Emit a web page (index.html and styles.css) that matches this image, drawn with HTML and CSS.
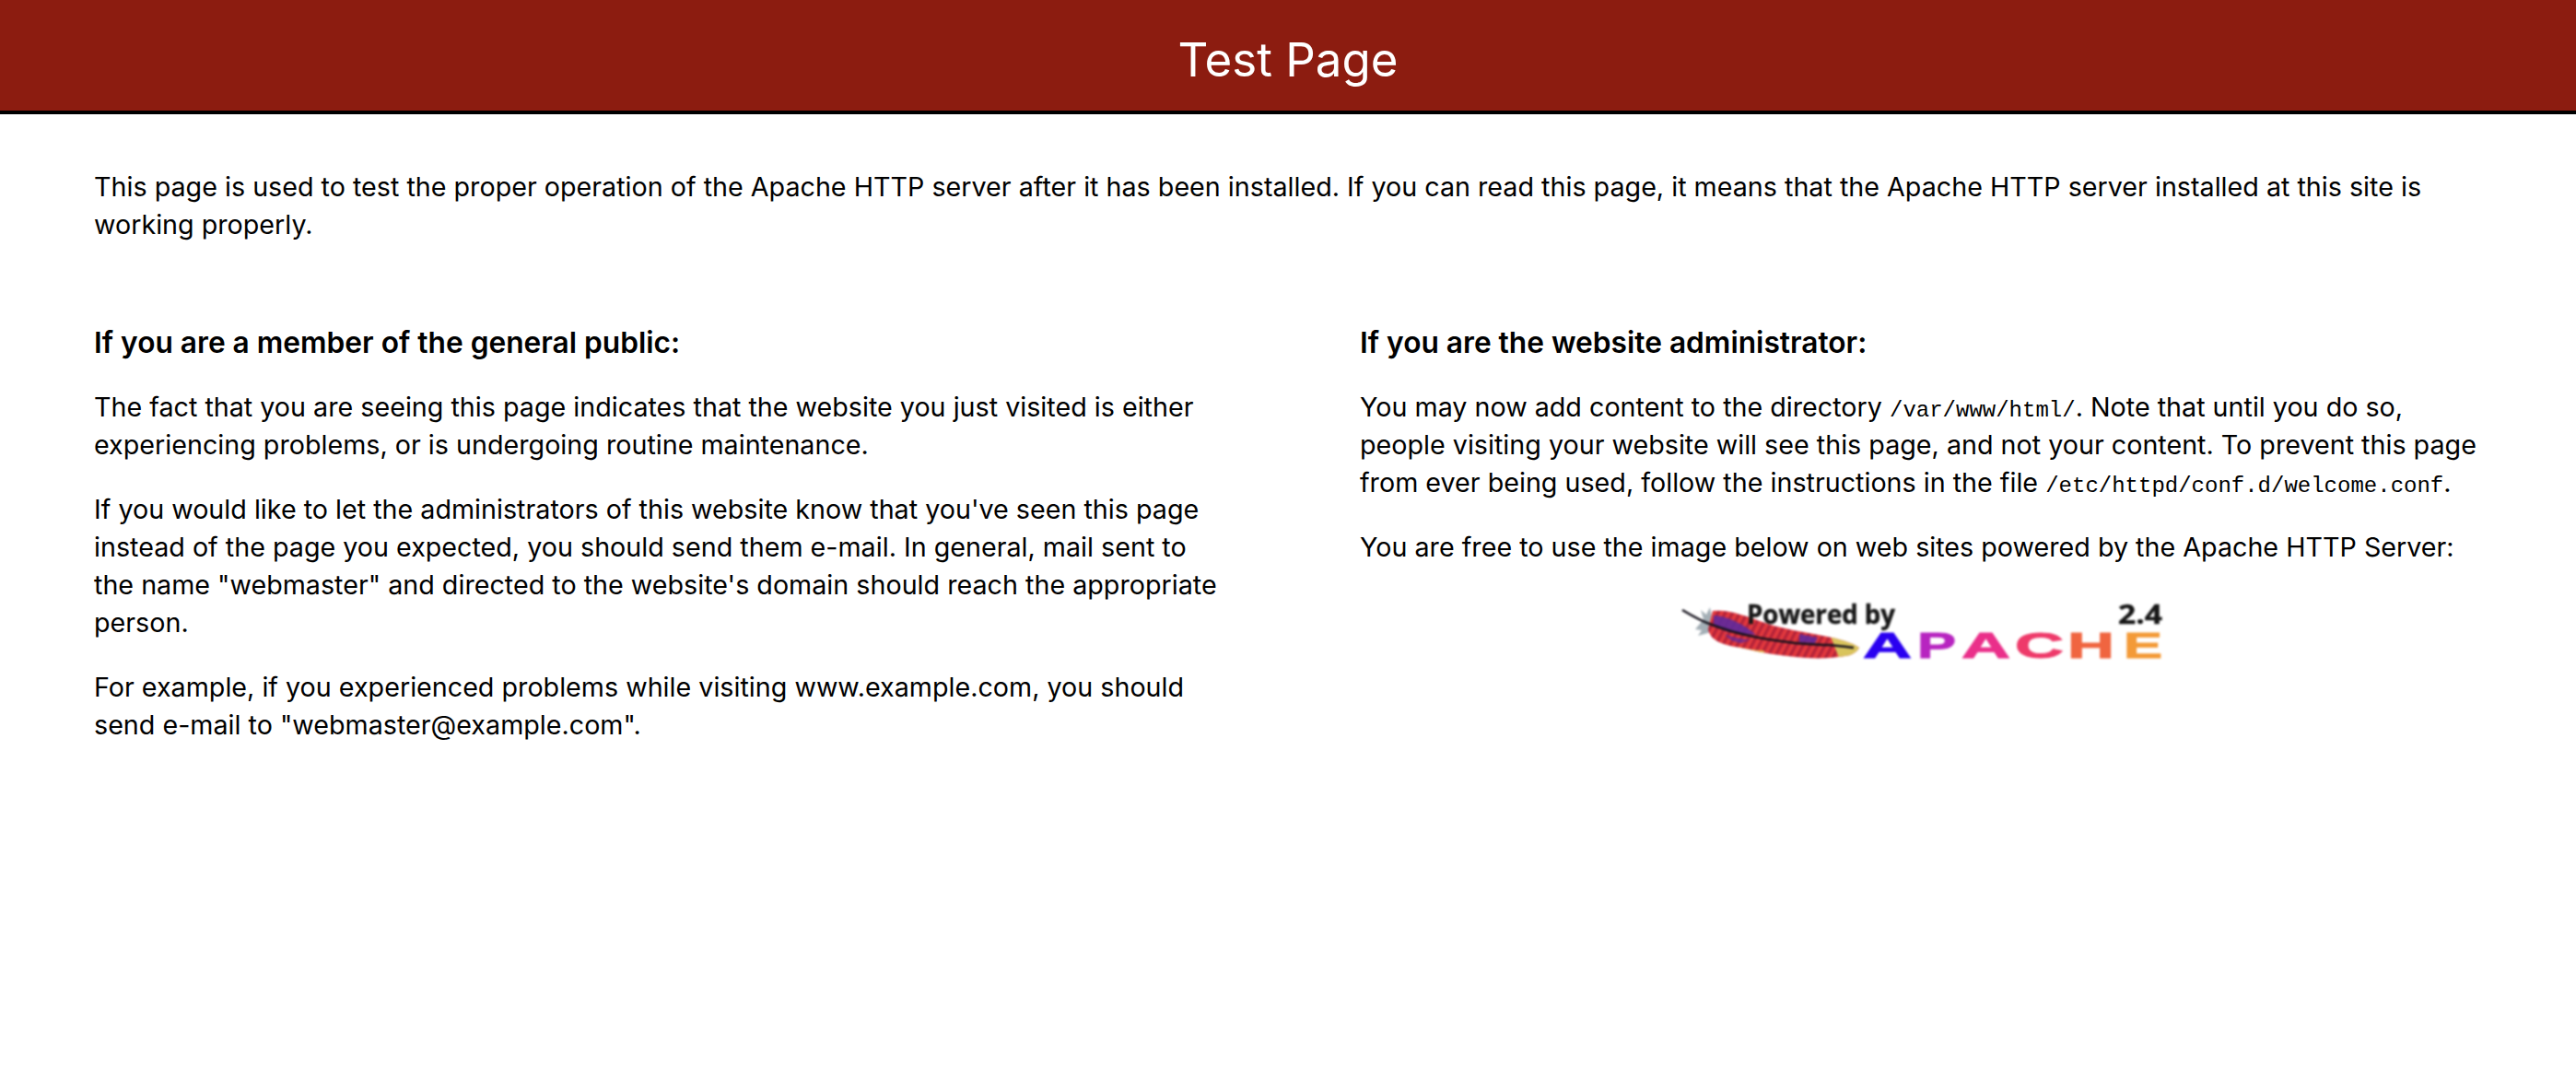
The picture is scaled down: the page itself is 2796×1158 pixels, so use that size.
FILE: index.html
```html
<!DOCTYPE html>
<html lang="en">
<head>
    <meta charset="UTF-8">
    <title>Test Page for the HTTP Server</title>
    <link rel="stylesheet" href="styles.css">
</head>
<body>
    <h1 class="page-title">Test Page</h1>

    <div class="content">
        <p class="lead">This page is used to test the proper operation of the Apache HTTP server after it has been installed. If you can read this page, it means that the Apache HTTP server installed at this site is working properly.</p>

        <div class="columns">
            <div class="column">
                <h2>If you are a member of the general public:</h2>
                <p>The fact that you are seeing this page indicates that the website you just visited is either experiencing problems, or is undergoing routine maintenance.</p>
                <p>If you would like to let the administrators of this website know that you've seen this page instead of the page you expected, you should send them e-mail. In general, mail sent to the name "webmaster" and directed to the website's domain should reach the appropriate person.</p>
                <p>For example, if you experienced problems while visiting www.example.com, you should send e-mail to "webmaster@example.com".</p>
            </div>
            <div class="column">
                <h2>If you are the website administrator:</h2>
                <p>You may now add content to the directory <code>/var/www/html/</code>. Note that until you do so, people visiting your website will see this page, and not your content. To prevent this page from ever being used, follow the instructions in the file <code>/etc/httpd/conf.d/welcome.conf</code>.</p>
                <p>You are free to use the image below on web sites powered by the Apache HTTP Server:</p>
                <div class="logo-wrap">
                    <svg class="logo" width="540" height="90" viewBox="0 -10 540 90">
                        <defs>
                            <pattern id="barbs" width="7" height="7" patternUnits="userSpaceOnUse" patternTransform="rotate(28)">
                                <rect width="7" height="7" fill="#d42c3c"/>
                                <rect width="2" height="7" fill="#a82238"/>
                                <rect x="4" width="1.5" height="7" fill="#ea453e"/>
                            </pattern>
                            <clipPath id="featherClip">
                                <path id="featherBody" d="M43 13 C55 12 64 14 73 17 C88 21 100 27 113 30 C125 33 136 35 147 37 C158 39 168 41 177 43 C188 46 197 49 202 53 C199 58 194 61 187 62 C170 65 150 65 133 63 C115 61 98 59 83 55 C70 52 58 51 50 47 C42 43 39 38 38 33 Z"/>
                            </clipPath>
                        </defs>
                        <!-- feather -->
                        <path d="M40 9 L36 17 L30 12 L33 22 L24 33 L31 34 L27 40 L38 37 L44 30 Z" fill="#a4afb6"/>
                        <g clip-path="url(#featherClip)">
                            <rect x="30" y="5" width="180" height="65" fill="url(#barbs)"/>
                            <path d="M44 18 C58 18 78 28 90 39 L60 36 L44 30 Z" fill="#5f2a9c" opacity="0.9"/>
                            <path d="M56 38 C66 42 76 44 84 44 L74 48 C66 47 60 44 56 38 Z" fill="#5f2a9c" opacity="0.75"/>
                            <path d="M137 38 L157 42 L154 48 L137 47 Z" fill="#5f2a9c" opacity="0.9"/>
                            <path d="M70 52 C80 54 90 56 98 56 L100 58 C88 58 78 56 70 52 Z" fill="#e5b94a"/>
                            <path d="M171 41 L203 50 L203 60 L180 64 Z" fill="#d9c45c"/>
                        </g>
                        <path d="M10 12 C20 18 30 24 42 28 C55 33 68 37 83 40 C100 44 116 46 133 48 C146 49 158 50 170 50 C180 51 190 52 196 53" fill="none" stroke="#15121c" stroke-width="2.6"/>
                        <!-- wordmark -->
                        <text class="logo-small" x="80" y="27" textLength="161" lengthAdjust="spacingAndGlyphs">Powered by</text>
                        <text class="logo-small" x="483" y="27" textLength="48" lengthAdjust="spacingAndGlyphs">2.4</text>
                        <text class="logo-name" x="206" y="64" textLength="53" lengthAdjust="spacingAndGlyphs" fill="#2a00f0" stroke="#2a00f0">A</text>
                        <text class="logo-name" x="265" y="64" textLength="42" lengthAdjust="spacingAndGlyphs" fill="#b725c0" stroke="#b725c0">P</text>
                        <text class="logo-name" x="313" y="64" textLength="53" lengthAdjust="spacingAndGlyphs" fill="#ea2f8a" stroke="#ea2f8a">A</text>
                        <text class="logo-name" x="371" y="64" textLength="53" lengthAdjust="spacingAndGlyphs" fill="#ee3a6a" stroke="#ee3a6a">C</text>
                        <text class="logo-name" x="428" y="64" textLength="51" lengthAdjust="spacingAndGlyphs" fill="#f06540" stroke="#f06540">H</text>
                        <text class="logo-name" x="489" y="64" textLength="42" lengthAdjust="spacingAndGlyphs" fill="#f39a38" stroke="#f39a38">E</text>
                    </svg>
                </div>
            </div>
        </div>
    </div>
</body>
</html>
```

FILE: styles.css
```css
body {
    margin: 0;
    background: #fff;
    color: #000;
    font-family: Inter, "Liberation Sans", Arial, sans-serif;
    font-size: 28.7px;
    line-height: 41px;
}
.page-title {
    margin: 0;
    height: 120px;
    line-height: 130px;
    background-color: #8c1c10;
    border-bottom: 4px solid #000;
    color: #fff;
    font-size: 51px;
    font-weight: normal;
    text-align: center;
}
.content {
    padding: 58px 102px 0;
}
.lead {
    margin: 0 0 87px;
}
.columns {
    display: grid;
    grid-template-columns: 1220px 1220px;
    column-gap: 154px;
}
.column h2 {
    margin: 0 0 29px;
    font-size: 31.7px;
    line-height: 41px;
    font-weight: 600;
}
.column p {
    margin: 0 0 29px;
}
code {
    font-family: "Liberation Mono", "Courier New", monospace;
    font-size: 24px;
    line-height: 1;
}
.logo-wrap {
    display: flex;
    justify-content: center;
    margin-top: -3px;
}
.logo {
    filter: blur(0.9px);
}
.logo-small {
    font-family: "Open Sans", sans-serif;
    font-size: 29px;
    font-weight: bold;
    fill: #161616;
    stroke: #161616;
    stroke-width: 0.4;
}
.logo-name {
    font-family: "Liberation Sans", sans-serif;
    font-size: 38px;
    font-weight: bold;
    stroke-width: 1;
}
```
